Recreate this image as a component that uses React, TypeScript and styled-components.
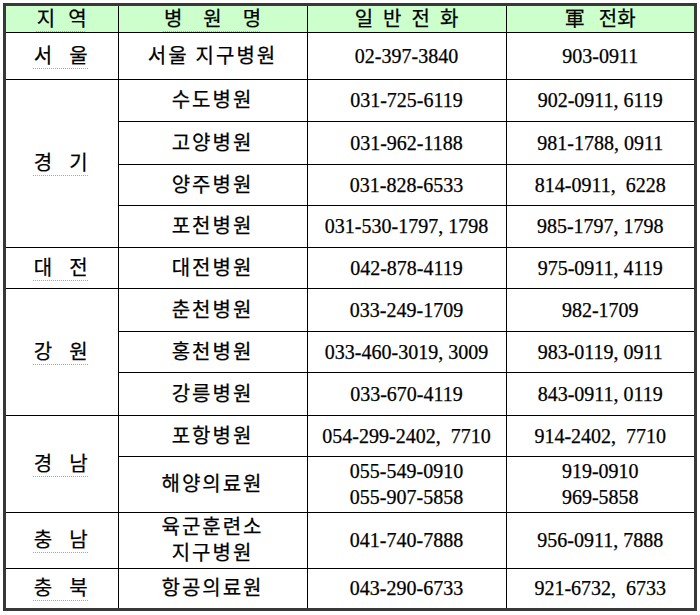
import styled, { createGlobalStyle } from "styled-components";

interface HospitalRow {
  name: string[];
  tel: string[];
  mil: string[];
  h: number;
  soft?: boolean;
}

interface Group {
  region: string;
  soft?: boolean;
  rows: HospitalRow[];
}

const groups: Group[] = [
  {
    region: "서 울",
    rows: [{ name: ["서울 지구병원"], tel: ["02-397-3840"], mil: ["903-0911"], h: 47 }],
  },
  {
    region: "경 기",
    rows: [
      { name: ["수도병원"], tel: ["031-725-6119"], mil: ["902-0911, 6119"], h: 42 },
      { name: ["고양병원"], tel: ["031-962-1188"], mil: ["981-1788, 0911"], h: 43, soft: true },
      { name: ["양주병원"], tel: ["031-828-6533"], mil: ["814-0911,  6228"], h: 41 },
      { name: ["포천병원"], tel: ["031-530-1797, 1798"], mil: ["985-1797, 1798"], h: 42, soft: true },
    ],
  },
  {
    region: "대 전",
    soft: true,
    rows: [{ name: ["대전병원"], tel: ["042-878-4119"], mil: ["975-0911, 4119"], h: 41 }],
  },
  {
    region: "강 원",
    rows: [
      { name: ["춘천병원"], tel: ["033-249-1709"], mil: ["982-1709"], h: 43 },
      { name: ["홍천병원"], tel: ["033-460-3019, 3009"], mil: ["983-0119, 0911"], h: 41, soft: true },
      { name: ["강릉병원"], tel: ["033-670-4119"], mil: ["843-0911, 0119"], h: 43 },
    ],
  },
  {
    region: "경 남",
    soft: true,
    rows: [
      { name: ["포항병원"], tel: ["054-299-2402,  7710"], mil: ["914-2402,  7710"], h: 41 },
      {
        name: ["해양의료원"],
        tel: ["055-549-0910", "055-907-5858"],
        mil: ["919-0910", "969-5858"],
        h: 56,
        soft: true,
      },
    ],
  },
  {
    region: "충 남",
    rows: [{ name: ["육군훈련소", "지구병원"], tel: ["041-740-7888"], mil: ["956-0911, 7888"], h: 56 }],
  },
  {
    region: "충 북",
    rows: [{ name: ["항공의료원"], tel: ["043-290-6733"], mil: ["921-6732,  6733"], h: 40 }],
  },
];

const GlobalStyle = createGlobalStyle`
  body {
    margin: 0;
    background: #ffffff;
  }
`;

const Page = styled.div`
  padding: 3px;
`;

const Frame = styled.div`
  width: 694px;
  box-sizing: border-box;
  border: 3px solid #383838;
`;

const Table = styled.table`
  width: 100%;
  border-collapse: collapse;
  border-style: hidden;
  table-layout: fixed;
  font-family: "Liberation Serif", "Noto Sans CJK KR", serif;
  font-size: 20px;
  color: #000;
  -webkit-text-stroke: 0.25px #000;
`;

const HeadCell = styled.th<{ $h: number }>`
  height: ${(p) => p.$h}px;
  box-sizing: border-box;
  padding: 0;
  border: 1px solid #000;
  background: #ccffcc;
  font-weight: normal;
  text-align: center;
  vertical-align: middle;
  line-height: 22px;
`;

const Cell = styled.td<{ $h?: number; $soft?: boolean; $hangul?: boolean }>`
  height: ${(p) => (p.$h ? `${p.$h}px` : "auto")};
  box-sizing: border-box;
  padding: 0;
  border: 1px solid #000;
  border-top-color: ${(p) => (p.$soft ? "#6c6c6c" : "#000")};
  text-align: center;
  vertical-align: middle;
  white-space: pre;
  line-height: 26px;
  letter-spacing: ${(p) => (p.$hangul ? "2px" : "0")};
`;

const Spaced = styled.span<{ $ws: number; $squiggle?: boolean }>`
  word-spacing: ${(p) => p.$ws}px;
  text-decoration: ${(p) => (p.$squiggle ? "underline dotted #f29a3c" : "none")};
  text-decoration-thickness: 1px;
  text-underline-offset: 5px;
`;

const Line = styled.div``;

const Lines = ({ items }: { items: string[] }) => (
  <>
    {items.map((t) => (
      <Line key={t}>{t}</Line>
    ))}
  </>
);

export default function App() {
  return (
    <Page>
      <GlobalStyle />
      <Frame>
        <Table>
          <colgroup>
            <col style={{ width: 112 }} />
            <col style={{ width: 189 }} />
            <col style={{ width: 199 }} />
            <col style={{ width: 188 }} />
          </colgroup>
          <thead>
            <tr>
              <HeadCell $h={26}>
                <Spaced $ws={8} $squiggle>
                  지 역
                </Spaced>
              </HeadCell>
              <HeadCell $h={26}>
                <Spaced $ws={16} $squiggle>
                  병 원 명
                </Spaced>
              </HeadCell>
              <HeadCell $h={26}>
                <Spaced $ws={5}>일 반 전 화</Spaced>
              </HeadCell>
              <HeadCell $h={26}>
                <Spaced $ws={9}>軍 전화</Spaced>
              </HeadCell>
            </tr>
          </thead>
          <tbody>
            {groups.map((g) =>
              g.rows.map((r, i) => (
                <tr key={g.region + r.name[0]}>
                  {i === 0 && (
                    <Cell rowSpan={g.rows.length} $soft={g.soft} $hangul>
                      <Spaced $ws={8} $squiggle>
                        {g.region}
                      </Spaced>
                    </Cell>
                  )}
                  <Cell $h={r.h} $soft={i === 0 ? g.soft : r.soft} $hangul>
                    <Lines items={r.name} />
                  </Cell>
                  <Cell $soft={i === 0 ? g.soft : r.soft}>
                    <Lines items={r.tel} />
                  </Cell>
                  <Cell $soft={i === 0 ? g.soft : r.soft}>
                    <Lines items={r.mil} />
                  </Cell>
                </tr>
              ))
            )}
          </tbody>
        </Table>
      </Frame>
    </Page>
  );
}
